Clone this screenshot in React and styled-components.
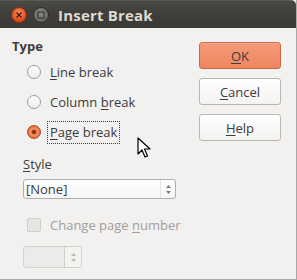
import React, { useState } from 'react'
import styled, { createGlobalStyle } from 'styled-components'

const GlobalStyle = createGlobalStyle`
	html, body {
		margin: 0;
		padding: 0;
		background: #f2f1f0;
	}
	body {
		font-family: 'Open Sans', 'DejaVu Sans', sans-serif;
		font-size: 13px;
		color: #3c3c3c;
	}
`

const Window = styled.div`
	position: relative;
	width: 297px;
	height: 280px;
	box-sizing: border-box;
	display: flex;
	flex-direction: column;
	background: #f2f1f0;
	border-right: 1px solid #a8a8a6;
	border-bottom: 1px solid #a8a8a6;
	overflow: hidden;
`

const TitleBar = styled.div`
	height: 28px;
	flex: none;
	display: flex;
	align-items: center;
	gap: 6px;
	padding-left: 11px;
	background: linear-gradient(#4b4a45 0%, #403f3b 40%, #3a3935 100%);
	border-top: 1px solid #5b5a55;
	border-top-right-radius: 5px;
	box-sizing: border-box;
`

const WinButton = styled.div`
	width: 16px;
	height: 16px;
	border-radius: 50%;
	display: flex;
	align-items: center;
	justify-content: center;
	box-sizing: border-box;
	background: ${p =>
		p.$close
			? 'radial-gradient(circle at 50% 35%, #f58a5a, #df4b1c 70%, #b8391a)'
			: 'radial-gradient(circle at 50% 35%, #8a8985, #6a6965 70%, #4e4d49)'};
	border: 1px solid ${p => (p.$close ? '#8c2e12' : '#2f2e2b')};
`

const Title = styled.div`
	margin-left: 3px;
	font-family: 'Open Sans', 'DejaVu Sans', sans-serif;
	font-weight: 700;
	font-size: 15px;
	color: #dfdbd2;
	letter-spacing: 0.2px;
`

const Body = styled.div`
	flex: 1;
	display: flex;
	padding: 10px 15px 0 12px;
`

const LeftCol = styled.div`
	flex: 1;
	display: flex;
	flex-direction: column;
`

const Heading = styled.div`
	font-weight: 700;
	line-height: 16px;
	height: 16px;
`

const RadioList = styled.div`
	display: flex;
	flex-direction: column;
	margin-top: 3px;
	padding-left: 15px;
`

const RadioRow = styled.label`
	height: 30px;
	display: flex;
	align-items: center;
	gap: 9px;
	cursor: default;
`

const RadioDot = styled.span`
	width: 14px;
	height: 14px;
	border-radius: 50%;
	box-sizing: border-box;
	flex: none;
	border: 1px solid ${p => (p.$on ? '#b4461f' : '#9e9d9a')};
	background: ${p =>
		p.$on
			? 'radial-gradient(circle, #7a2a10 0, #a8401c 2px, #f09a72 3px, #ec7b4f 5px, #e06535 7px)'
			: 'linear-gradient(#ffffff, #ecebea)'};
`

const RadioText = styled.span`
	padding: 1px 2px;
	margin-left: -3px;
	border: 1px dotted ${p => (p.$focus ? '#3c3c3c' : 'transparent')};
	line-height: 19px;
`

const U = styled.span`
	text-decoration: underline;
	text-underline-offset: 2px;
`

const StyleBlock = styled.div`
	display: flex;
	flex-direction: column;
	padding-left: 11px;
	margin-top: 9px;
`

const Label = styled.div`
	line-height: 16px;
`

const Select = styled.div`
	margin-top: 7px;
	width: 153px;
	height: 20px;
	box-sizing: border-box;
	border: 1px solid #b0aea9;
	border-radius: 3px;
	background: linear-gradient(#ffffff, #f6f6f5);
	display: flex;
	align-items: center;
	justify-content: space-between;
	padding-left: 2px;
	font-size: 13px;
`

const Arrows = styled.div`
	width: 14px;
	height: 100%;
	display: flex;
	flex-direction: column;
	align-items: center;
	justify-content: center;
	gap: 3px;
	border-left: 1px solid #e3e2e0;
`

const CheckRow = styled.div`
	margin-top: 18px;
	height: 16px;
	display: flex;
	align-items: center;
	gap: 9px;
	padding-left: 4px;
	color: #a09f9c;
`

const CheckBox = styled.span`
	width: 14px;
	height: 14px;
	box-sizing: border-box;
	border: 1px solid #cfcecb;
	border-radius: 2px;
	background: #e7e6e4;
`

const Spin = styled.div`
	margin-top: 13px;
	width: 59px;
	height: 22px;
	box-sizing: border-box;
	display: flex;
	border: 1px solid #d2d1ce;
	border-radius: 3px;
	background: #ecebea;
`

const SpinField = styled.div`
	flex: 1;
	border-right: 1px solid #d2d1ce;
`

const SpinArrows = styled.div`
	width: 16px;
	display: flex;
	flex-direction: column;
	align-items: center;
	justify-content: center;
	gap: 3px;
	background: #f3f2f1;
	border-radius: 0 3px 3px 0;
`

const RightCol = styled.div`
	width: 82px;
	display: flex;
	flex-direction: column;
	gap: 9px;
	padding-top: 4px;
`

const Button = styled.button`
	width: 82px;
	height: 27px;
	box-sizing: border-box;
	border-radius: 3px;
	font-family: 'Open Sans', 'DejaVu Sans', sans-serif;
	font-size: 13px;
	color: #3c3c3c;
	padding: 0;
	border: 1px solid ${p => (p.$primary ? '#c9694a' : '#b9b6b0')};
	background: ${p =>
		p.$primary
			? 'linear-gradient(#f59a77, #ee8660)'
			: 'linear-gradient(#ffffff, #f4f3f2)'};
	box-shadow: inset 0 1px 0 ${p => (p.$primary ? '#f8ad90' : '#ffffff')};
`

const Cursor = styled.svg`
	position: absolute;
	left: 137px;
	top: 137px;
`

const Tri = ({ up, color = '#7a7975' }) => (
	<svg width="5" height="3" viewBox="0 0 5 3">
		<path d={up ? 'M0 3 L2.5 0 L5 3 Z' : 'M0 0 L2.5 3 L5 0 Z'} fill={color} />
	</svg>
)

const options = [
	{ key: 'line', label: <><U>L</U>ine break</> },
	{ key: 'column', label: <>Column <U>b</U>reak</> },
	{ key: 'page', label: <><U>P</U>age break</> },
]

const App = () => {
	const [type, setType] = useState('page')
	return (
		<>
			<GlobalStyle />
			<Window>
				<TitleBar>
					<WinButton $close>
						<svg width="8" height="8" viewBox="0 0 8 8">
							<path d="M1.5 1.5 L6.5 6.5 M6.5 1.5 L1.5 6.5" stroke="#4a1a0a" strokeWidth="1.4" />
						</svg>
					</WinButton>
					<WinButton>
						<svg width="8" height="8" viewBox="0 0 8 8">
							<rect x="1" y="1" width="6" height="6" fill="none" stroke="#3a3935" strokeWidth="1.2" />
						</svg>
					</WinButton>
					<Title>Insert Break</Title>
				</TitleBar>
				<Body>
					<LeftCol>
						<Heading>Type</Heading>
						<RadioList>
							{options.map(o => (
								<RadioRow key={o.key} onClick={() => setType(o.key)}>
									<RadioDot $on={type === o.key} />
									<RadioText $focus={type === o.key}>{o.label}</RadioText>
								</RadioRow>
							))}
						</RadioList>
						<StyleBlock>
							<Label><U>S</U>tyle</Label>
							<Select>
								<span>[None]</span>
								<Arrows>
									<Tri up />
									<Tri />
								</Arrows>
							</Select>
							<CheckRow>
								<CheckBox />
								<span>Change page <U>n</U>umber</span>
							</CheckRow>
							<Spin>
								<SpinField />
								<SpinArrows>
									<Tri up color="#b9b8b5" />
									<Tri color="#b9b8b5" />
								</SpinArrows>
							</Spin>
						</StyleBlock>
					</LeftCol>
					<RightCol>
						<Button $primary><U>O</U>K</Button>
						<Button><U>C</U>ancel</Button>
						<Button><U>H</U>elp</Button>
					</RightCol>
				</Body>
				<Cursor width="14" height="22" viewBox="0 0 14 22">
					<path d="M1 1 L1 17 L5 13 L8 20 L10.5 19 L7.5 12 L13 12 Z" fill="#ffffff" stroke="#000000" strokeWidth="1.2" strokeLinejoin="round" />
				</Cursor>
			</Window>
		</>
	)
}

export default App
